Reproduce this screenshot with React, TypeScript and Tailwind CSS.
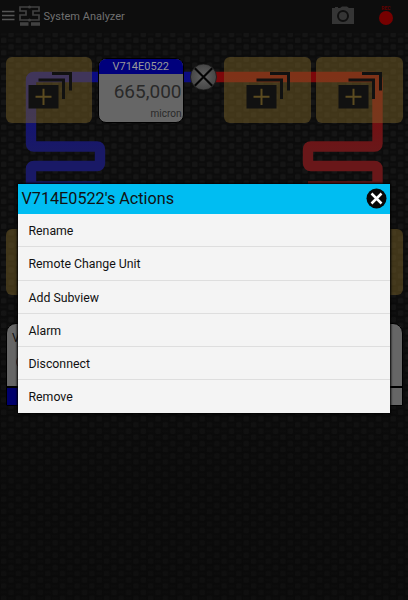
import React from "react";

function Weave() {
  return (
    <svg className="absolute inset-0 h-full w-full" aria-hidden="true">
      <defs>
        <pattern id="weave" width="14.7" height="12.4" patternUnits="userSpaceOnUse">
          <rect width="15" height="13" fill="#0c0c0c" />
          <rect x="1" y="0.5" width="5.500" height="5.500" rx="1.500" fill="#151515" />
          <rect x="7.500" y="2" width="6.500" height="2.500" rx="1" fill="#101010" />
          <rect x="8.300" y="6.800" width="5.500" height="5.500" rx="1.500" fill="#151515" />
          <rect x="0.500" y="8.300" width="6.500" height="2.500" rx="1" fill="#101010" />
          <path d="M0 6.200H15M7.200 0V13" stroke="#090909" strokeWidth=".6" />
        </pattern>
        <linearGradient id="shade" x1="0" y1="0" x2="0" y2="1">
          <stop offset=".5" stopColor="#080808" stopOpacity="0" />
          <stop offset=".8" stopColor="#080808" stopOpacity=".45" />
        </linearGradient>
      </defs>
      <rect width="100%" height="100%" fill="url(#weave)" />
      <rect width="100%" height="100%" fill="url(#shade)" />
    </svg>
  );
}

function Pipes() {
  return (
    <svg className="absolute inset-0" width="408" height="600" fill="none" strokeWidth="10.4" strokeLinejoin="round">
      <defs>
        <linearGradient id="cold" gradientUnits="userSpaceOnUse" x1="0" y1="77" x2="0" y2="150">
          <stop offset="0" stopColor="#0b0b82" />
          <stop offset="1" stopColor="#191966" />
        </linearGradient>
        <linearGradient id="hot" gradientUnits="userSpaceOnUse" x1="0" y1="77" x2="0" y2="150">
          <stop offset="0" stopColor="#7c070a" />
          <stop offset="1" stopColor="#691719" />
        </linearGradient>
      </defs>
      <path stroke="url(#cold)" d="M204 77H34Q31 77 31 80V143.500Q31 146.500 34 146.500H97Q100 146.500 100 149.500V163Q100 166 97 166H34Q31 166 31 169V183.500Q31 186.500 34 186.500H100" />
      <path stroke="url(#hot)" d="M204 77H374.500Q377.500 77 377.500 80V143.500Q377.500 146.500 374.500 146.500H311Q308 146.500 308 149.500V163Q308 166 311 166H374.500Q377.500 166 377.500 169V183.500Q377.500 186.500 374.500 186.500H308" />
    </svg>
  );
}

function Slot() {
  return (
    <div className="relative h-[66px] w-[86.500px] rounded-[6px] bg-[#80682a]/45">
      <svg className="absolute inset-0" width="86" height="66" fill="none">
        <path d="M46 16.500H64.500V33.500" stroke="#111" strokeWidth="3" />
        <path d="M32.500 23H57.500V42" stroke="#111" strokeWidth="3" />
        <rect x="22.500" y="28" width="30" height="23.500" fill="#111" />
        <path d="M29.500 39.700H45.500M37.500 31.700V48" stroke="#5b4b20" strokeWidth="2" />
      </svg>
    </div>
  );
}

function Meter() {
  return (
    <div className="relative flex h-[65.500px] w-[85.500px] flex-col overflow-hidden rounded-[8px] border-[1.500px] border-black bg-[#666]">
      <div className="h-[15px] bg-[#00007c] text-center text-[11px] leading-[16px] text-[#999]">V714E0522</div>
      <div className="h-[34px] pr-[1px] text-right text-[19px] leading-[36px] text-[#292929]">665,000</div>
      <div className="pr-[1px] text-right text-[10px] leading-[12px] text-[#292929]">micron</div>
    </div>
  );
}

function Header() {
  return (
    <header className="relative flex h-[33px] items-center bg-[#0d0d0d] text-[#707070]">
      <svg className="ml-[2px]" width="13" height="33" stroke="#555" strokeWidth="1.500">
        <path d="M0 11.500H12.500M0 15.500H12.500M0 19.500H12.500" />
      </svg>
      <svg className="ml-[3px]" width="24" height="33" fill="none" stroke="#414141" strokeWidth="1.700">
        <path d="M10 7H2V11H8V15H2V20H10M13 7H21V11H15V15H21V20H13M8 7H15M8 20H15" />
        <circle cx="11.500" cy="7" r="1.500" fill="#414141" stroke="none" />
        <circle cx="11.500" cy="20" r="1.500" fill="#414141" stroke="none" />
        <path d="M2 24H10.500M13 24H22" strokeWidth="3.500" />
      </svg>
      <h1 className="ml-[1.500px] text-[11px] leading-[32px]">System Analyzer</h1>
      <div className="ml-auto flex h-full">
        <svg width="24" height="33">
          <path d="M1 8H4V7H7V8H9L11 6.500H16L18 8H23V24H1Z" fill="#353535" />
          <circle cx="12" cy="16" r="5" fill="none" stroke="#101010" strokeWidth="2" />
        </svg>
        <div className="ml-[23px] mr-[14px] flex w-[16px] flex-col items-center pt-[6px]">
          <span className="text-[5px] font-bold leading-[5px] text-[#620000]">REC</span>
          <span className="h-[14px] w-[14px] rounded-full bg-[#750000]" />
        </div>
      </div>
    </header>
  );
}

function Valve() {
  return (
    <svg className="absolute left-[190px] top-[30px]" width="28" height="28">
      <defs>
        <radialGradient id="metal">
          <stop stopColor="#626262" />
          <stop offset="1" stopColor="#454545" />
        </radialGradient>
      </defs>
      <circle cx="13.500" cy="14" r="13" fill="url(#metal)" stroke="#161616" strokeWidth=".7" />
      <path d="M4.800 5.300L22.200 22.700M22.200 5.300L4.800 22.700" stroke="#050505" strokeWidth="2.100" />
    </svg>
  );
}

const actions = ["Rename", "Remote Change Unit", "Add Subview", "Alarm", "Disconnect", "Remove"];

function ActionDialog() {
  return (
    <section className="absolute left-[18px] top-[184px] h-[229px] w-[372px] bg-[#f4f4f4] text-[#111] shadow-[0_0_2px_1px_#000]">
      <div className="flex h-[30px] items-center justify-between bg-[#00bdf2] pl-[3.500px] pr-[3px]">
        <h2 className="text-[16.200px] leading-[30px]">V714E0522's Actions</h2>
        <button aria-label="Close">
          <svg className="-mt-[1px]" width="21" height="21">
            <circle cx="10.500" cy="10.500" r="10" fill="#080808" />
            <path d="M5.500 5.500L15.500 15.500M15.500 5.500L5.500 15.500" stroke="#fff" strokeWidth="2.500" />
          </svg>
        </button>
      </div>
      <ul>
        {actions.map((action) => (
          <li key={action} className="h-[33.300px] border-b border-[#dedede] pl-[10.500px] text-[12.300px] leading-[34px] last:h-[32px] last:border-0">
            {action}
          </li>
        ))}
      </ul>
    </section>
  );
}

export default function App() {
  return (
    <main className="relative h-[600px] w-[408px] overflow-hidden bg-[#0b0b0b] font-[Roboto,sans-serif]">
      <Weave />
      <Pipes />
      <Header />
      <div className="relative mt-[24px] flex h-[66px] pl-[5.500px]">
        <Slot />
        <div className="ml-[6px] mt-[.5px]"><Meter /></div>
        <div className="ml-[40.500px]"><Slot /></div>
        <div className="ml-[5.500px]"><Slot /></div>
      </div>
      <div className="relative mt-[106px] flex justify-between px-[5.500px]">
        <Slot />
        <Slot />
      </div>
      <div className="relative ml-[6px] mt-[28px] h-[83px] w-[397px] overflow-hidden rounded-t-[10px] border border-black bg-[#666]">
        <div className="h-[64px] border-b-2 border-black pl-[5px] text-[12px] leading-[28px] text-[#111]">V</div>
        <div className="flex h-[17px]">
          <div className="w-1/2 bg-[#00006c]" />
        </div>
        <span className="absolute left-[9px] top-[33px] h-[10px] w-[8px] rounded-full border border-[#49322e]" />
      </div>
      <div className="absolute left-0 top-[33px]"><Valve /></div>
      <ActionDialog />
    </main>
  );
}
